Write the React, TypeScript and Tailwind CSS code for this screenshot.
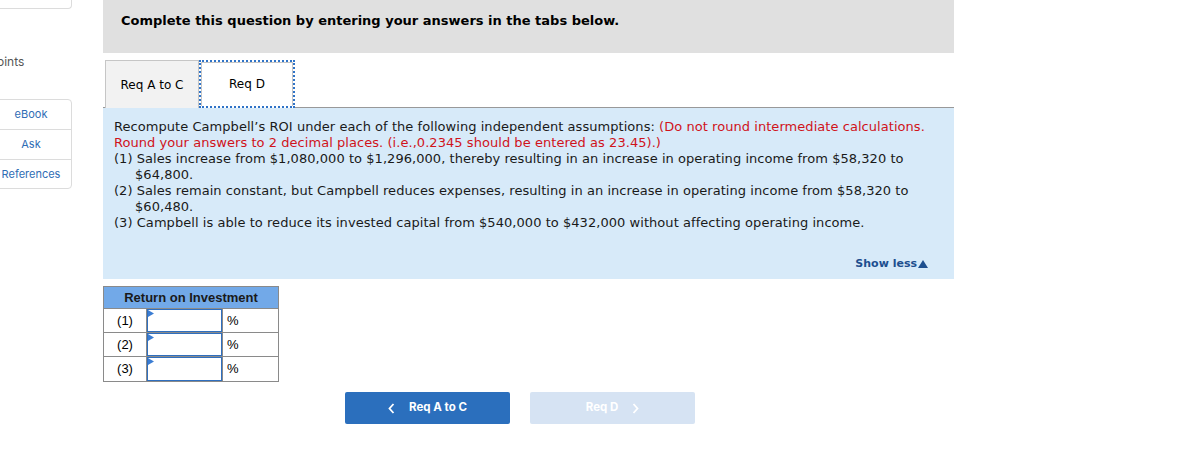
import React from "react";

const verdana = { fontFamily: '"DejaVu Sans", Verdana, sans-serif' };

export default function App() {
  return (
    <div className="w-[1192px] h-[470px] bg-white flex overflow-hidden" style={{ fontFamily: '"Liberation Sans", Arial, sans-serif' }}>
      {/* Sidebar */}
      <div className="w-[103px] shrink-0 flex flex-col">
        <div className="ml-[-10px] w-[82px] h-[9px] border border-t-0 border-[#dcdcdc] rounded-b-[4px]" />
        <div className="mt-[46px] ml-[-3px] text-[12px] text-[#555] leading-[14px]" style={{ fontFamily: 'Inter, "Liberation Sans", sans-serif' }}>oints</div>
        <div className="mt-[30px] ml-[-10px] w-[82px] border border-[#dcdcdc] rounded-[4px] flex flex-col text-[11px] text-[#2f6db5]" style={{ fontFamily: 'Inter, "Liberation Sans", sans-serif' }}>
          <div className="h-[30px] flex items-center justify-center border-b border-[#dcdcdc]">eBook</div>
          <div className="h-[30px] flex items-center justify-center border-b border-[#dcdcdc]">Ask</div>
          <div className="h-[28px] flex items-center justify-center">References</div>
        </div>
      </div>

      {/* Main */}
      <div className="w-[851px] shrink-0 flex flex-col" style={verdana}>
        <div className="h-[53px] bg-[#e0e0e0] pl-[18px] pt-[13px] text-[13px] font-bold text-black leading-[16px]">
          Complete this question by entering your answers in the tabs below.
        </div>
        <div className="mt-[7px] h-[48px] flex border-b border-[#999]">
          <div className="ml-[2px] w-[94px] h-[48px] bg-[#f2f2f2] border border-b-0 border-[#c6c6c6] flex items-center justify-center text-[12px] text-black">
            Req A to C
          </div>
          <div className="w-[96px] h-[48px] bg-white border-2 border-dotted border-[#2f73c7] flex items-center justify-center text-[12px] text-black">
            <div className="w-full h-full border border-[#c6c6c6] border-b-0 flex items-center justify-center pb-[1px]">Req D</div>
          </div>
        </div>
        <div className="h-[171px] bg-[#d7eaf9] pl-[11px] pr-[20px] pt-[11px] text-[13px] leading-[16px] tracking-[0.05px] text-[#1a1a1a] flex flex-col">
          <div>
            Recompute Campbell’s ROI under each of the following independent assumptions:{" "}
            <span className="text-[#d0131b]">
              (Do not round intermediate calculations. Round your answers to 2 decimal places. (i.e.,0.2345 should be entered as 23.45).)
            </span>
          </div>
          <div className="pl-[21px] indent-[-21px]">
            (1) Sales increase from $1,080,000 to $1,296,000, thereby resulting in an increase in operating income from $58,320 to $64,800.
          </div>
          <div className="pl-[21px] indent-[-21px]">
            (2) Sales remain constant, but Campbell reduces expenses, resulting in an increase in operating income from $58,320 to $60,480.
          </div>
          <div className="pl-[21px] indent-[-21px]">
            (3) Campbell is able to reduce its invested capital from $540,000 to $432,000 without affecting operating income.
          </div>
          <div className="mt-auto mb-[7px] mr-[6px] self-end text-[11px] tracking-normal font-bold text-[#1d4f8f] flex items-center gap-[1px]">
            Show less
            <svg width="10" height="8" viewBox="0 0 10 8"><path d="M5 0 L10 8 L0 8 Z" fill="#1d4f8f" /></svg>
          </div>
        </div>

        {/* Table */}
        <div className="mt-[7px] w-[176px] border border-[#8a8a8a] text-[13px] text-black" style={{ fontFamily: '"Liberation Sans", Arial, sans-serif' }}>
          <div className="h-[22px] bg-[#72a9e8] border-b border-[#8a8a8a] flex items-center justify-center font-bold text-[#1a1a1a]">
            Return on Investment
          </div>
          {["(1)", "(2)", "(3)"].map((r, i) => (
            <div key={r} className={`h-[24px] flex ${i < 2 ? "border-b border-[#8a8a8a]" : ""}`}>
              <div className="w-[43px] border-r border-[#8a8a8a] flex items-center justify-center">{r}</div>
              <div className="w-[75px] relative p-0 flex">
                <div className="flex-1 border border-[#2f6fbf] bg-white" />
                <svg className="absolute left-[1px] top-[1px]" width="6" height="7" viewBox="0 0 6 7"><path d="M0 0 L6 3.5 L0 7 Z" fill="#3b7dd3" /></svg>
              </div>
              <div className="flex-1 border-l border-[#8a8a8a] flex items-center pl-[4px]">%</div>
            </div>
          ))}
        </div>

        {/* Buttons */}
        <div className="mt-[10px] ml-[242px] flex gap-[20px]" style={{ fontFamily: 'Inter, "Liberation Sans", sans-serif' }}>
          <div className="w-[165px] h-[32px] rounded-[2px] bg-[#2b6fbd] flex items-center justify-center gap-[14px] text-white text-[11.5px] font-bold">
            <svg width="7" height="11" viewBox="0 0 7 11"><path d="M5.5 1 L1.5 5.5 L5.5 10" stroke="white" strokeWidth="1.8" fill="none" /></svg>
            <span>Req A to C</span>
          </div>
          <div className="w-[165px] h-[32px] rounded-[2px] bg-[#d6e3f3] flex items-center justify-center gap-[14px] text-white text-[11.5px] font-bold">
            <span>Req D</span>
            <svg width="7" height="11" viewBox="0 0 7 11"><path d="M1.5 1 L5.5 5.5 L1.5 10" stroke="white" strokeWidth="1.8" fill="none" /></svg>
          </div>
        </div>
      </div>
    </div>
  );
}
